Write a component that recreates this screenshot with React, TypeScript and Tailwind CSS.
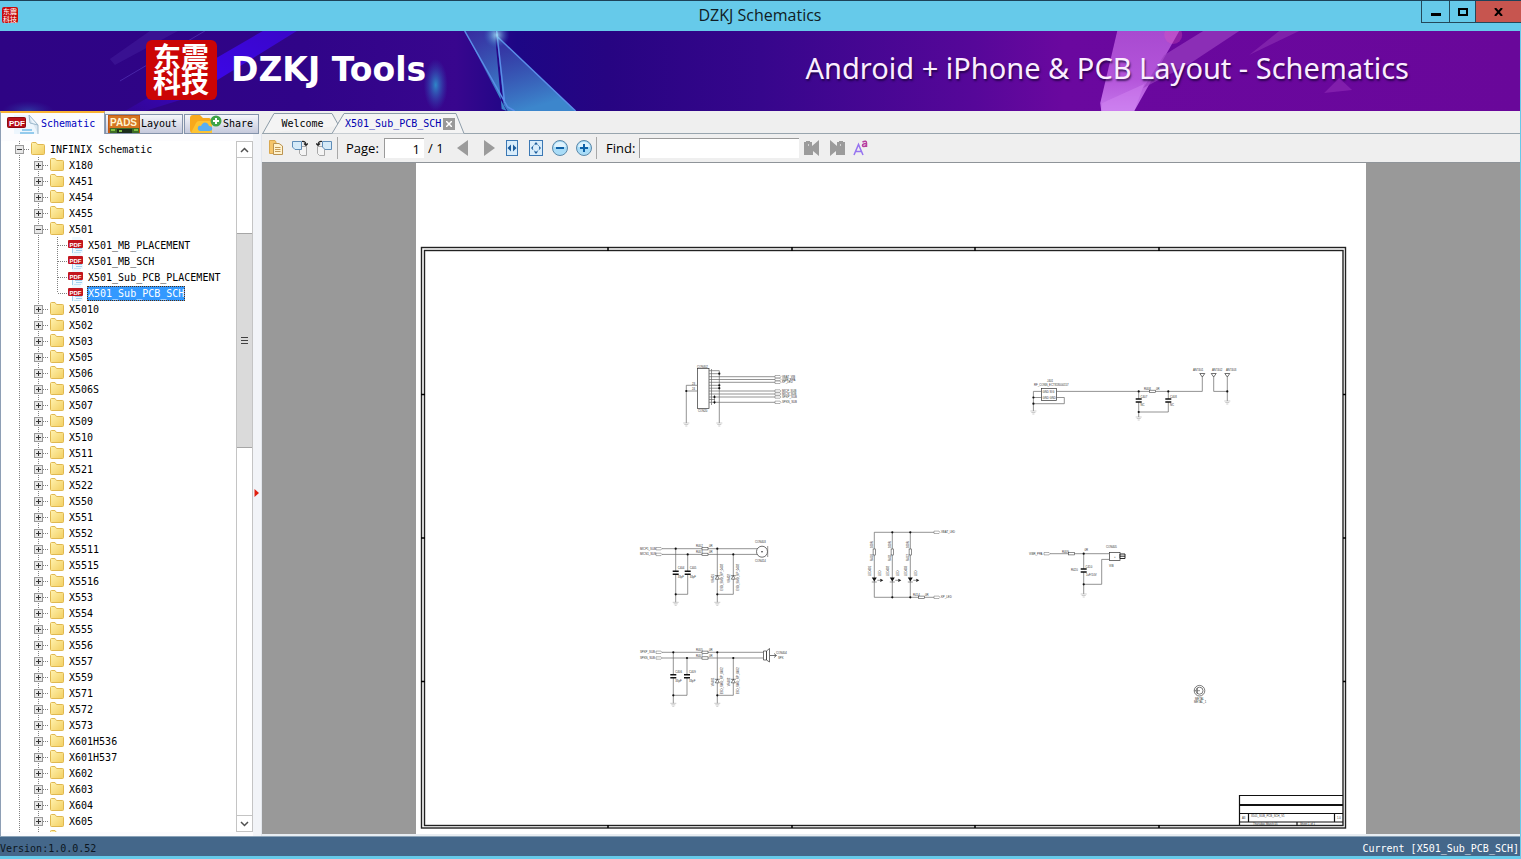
import { useState } from "react";
import type { ReactNode } from "react";

const MONO = "font-['DejaVu_Sans_Mono',monospace] text-[10px] leading-4";
const UI = "font-['Open_Sans','Noto_Sans',sans-serif]";

type Node = { name: string; level: number; open?: boolean; pdf?: boolean; last?: boolean };

const before = ["X180", "X451", "X454", "X455"];
const docs = ["X501_MB_PLACEMENT", "X501_MB_SCH", "X501_Sub_PCB_PLACEMENT", "X501_Sub_PCB_SCH"];
const after = [
  "X5010", "X502", "X503", "X505", "X506", "X506S", "X507", "X509", "X510", "X511", "X521",
  "X522", "X550", "X551", "X552", "X5511", "X5515", "X5516", "X553", "X554", "X555", "X556",
  "X557", "X559", "X571", "X572", "X573", "X601H536", "X601H537", "X602", "X603", "X604", "X605", "",
];

const nodes: Node[] = [
  { name: "INFINIX Schematic", level: 0, open: true },
  ...before.map((name) => ({ name, level: 1 })),
  { name: "X501", level: 1, open: true },
  ...docs.map((name, i) => ({ name, level: 2, pdf: true, last: i === docs.length - 1 })),
  ...after.map((name) => ({ name, level: 1 })),
];

/* ---------- tree ---------- */

function Guide({ kind }: { kind: "line" | "plus" | "minus" | "tee" | "end" }) {
  const box = kind === "plus" || kind === "minus";
  return (
    <svg width="19" height="16" viewBox="0 0 19 16" className="shrink-0" shapeRendering="crispEdges">
      <path d={kind === "end" ? "M9.5 0V8" : "M9.5 0V16"} stroke="#808080" strokeDasharray="1 1" />
      {kind !== "line" && <path d="M10 8.5H19" stroke="#808080" strokeDasharray="1 1" />}
      {box && <rect x="5.5" y="4.5" width="8" height="8" fill="#e8e8e8" stroke="#9a9a9a" />}
      {box && <path d="M7 8.5H12" stroke="#333" />}
      {kind === "plus" && <path d="M9.5 6V11" stroke="#333" />}
    </svg>
  );
}

function FolderIcon() {
  return (
    <svg width="15" height="14" viewBox="0 0 15 14" className="shrink-0">
      <defs>
        <linearGradient id="folder" x1="0" y1="0" x2="1" y2="1">
          <stop offset="0" stopColor="#fff3b0" />
          <stop offset="1" stopColor="#f3cf62" />
        </linearGradient>
      </defs>
      <path d="M0.500 11.500V1.500Q0.500 0.500 1.500 0.500H5L6.500 2.500H12.500Q13.500 2.500 13.500 3.500V11.500Q13.500 12.500 12.500 12.500H1.500Q0.500 12.500 0.500 11.500Z" fill="url(#folder)" stroke="#e0b850" />
    </svg>
  );
}

function PdfIcon() {
  return (
    <svg width="16" height="16" viewBox="0 0 16 16" className="shrink-0">
      <path d="M4 0H12L15 4V16H4Z" fill="#eef8ff" />
      <path d="M4.500 9V16M7 11.500H14M8 13.500H14" stroke="#9fd0ee" />
      <path d="M6 15.500H13" stroke="#c3e3f5" />
      <rect x="0" y="3" width="15" height="8" rx="1" fill="#c3161d" />
      <text x="1.500" y="9.500" fontSize="6" fontWeight="bold" fill="#fff" fontFamily="Liberation Sans">PDF</text>
    </svg>
  );
}

function TreeRow({ node, selected, onSelect }: { node: Node; selected: boolean; onSelect: () => void }) {
  return (
    <li className="flex h-4 shrink-0 items-center">
      {node.level > 0 && <Guide kind="line" />}
      {node.level > 1 && <Guide kind="line" />}
      {node.pdf ? <Guide kind={node.last ? "end" : "tee"} /> : <Guide kind={node.open ? "minus" : "plus"} />}
      <button type="button" onClick={onSelect} className="flex h-4 items-center pl-px">
        {node.pdf ? <PdfIcon /> : <span className="w-4 pl-px"><FolderIcon /></span>}
        {node.name && (
          <span
            className={`ml-[3px] mt-px whitespace-nowrap px-px leading-[15px] ${
              selected ? "bg-[#3399ff] text-white outline-1 -outline-offset-1 outline-dotted outline-[#553010]" : "text-black"
            }`}
          >
            {node.name}
          </span>
        )}
      </button>
    </li>
  );
}

function ScrollBar() {
  return (
    <div className="flex w-[17px] shrink-0 flex-col border-x border-[#c4c4c4] bg-white">
      <button type="button" aria-label="Scroll up" className="flex h-[17px] items-center justify-center border-y border-[#c4c4c4]">
        <svg width="9" height="6" viewBox="0 0 9 6"><path d="M1 5L4.500 1.500L8 5" fill="none" stroke="#505050" strokeWidth="1.500" /></svg>
      </button>
      <div className="flex-[75]" />
      <div className="flex flex-[214] items-center justify-center border-y border-[#a6a6a6] bg-[#dadada]">
        <svg width="7" height="7" viewBox="0 0 7 7" shapeRendering="crispEdges"><path d="M0 0.500H7M0 3.500H7M0 6.500H7" stroke="#404040" /></svg>
      </div>
      <div className="flex-[369]" />
      <button type="button" aria-label="Scroll down" className="flex h-[17px] items-center justify-center border-y border-[#c4c4c4]">
        <svg width="9" height="6" viewBox="0 0 9 6"><path d="M1 1L4.500 4.500L8 1" fill="none" stroke="#505050" strokeWidth="1.500" /></svg>
      </button>
    </div>
  );
}

/* ---------- side tabs ---------- */

function SchematicTabIcon() {
  return (
    <svg width="32" height="20" viewBox="0 0 32 20">
      <path d="M7 1H23L31 11V20H7Z" fill="#edf6fd" />
      <path d="M22 1L31 11V20M22 1L23 9L31 11" fill="#dbe8f2" stroke="#9bb8cc" />
      <path d="M15 16H25M13 19H27" stroke="#94cbed" strokeWidth="2" />
      <rect x="0.500" y="3.500" width="18" height="10" rx="1" fill="#b90f18" stroke="#8a0a10" />
      <text x="2" y="11.500" fontSize="8" fontWeight="bold" fill="#fff" fontFamily="Liberation Sans">PDF</text>
    </svg>
  );
}

function PadsIcon() {
  return (
    <svg width="32" height="18" viewBox="0 0 32 18">
      <rect width="32" height="18" fill="#c25a13" />
      <rect x="1" y="1" width="30" height="12" fill="#d47421" />
      <path d="M2 13H31V18H2Z" fill="#3d6d26" />
      <path d="M9 14H24V18H9Z" fill="#1c2e1c" />
      <path d="M3 15H7M26 15H30M11 16H14" stroke="#7fc043" strokeWidth="2" />
      <text x="2" y="11" fontSize="10" fontWeight="bold" fill="#fff4cf" fontFamily="Liberation Sans">PADS</text>
    </svg>
  );
}

function ShareIcon() {
  return (
    <svg width="32" height="18" viewBox="0 0 32 18">
      <path d="M0 3Q0 0 3 0H10L13 3H19Q21 3 21 6V18H3Q0 18 0 15Z" fill="#f8a91c" />
      <path d="M1 18L6 8Q7 6 9 6H22V18Z" fill="#fdc331" />
      <path d="M10 16Q7 15 8 12Q9 10 11 11Q13 6 17 8Q19 10 19 11Q23 11 22 15Q21 16 19 16Z" fill="#58aef0" />
      <circle cx="26" cy="6" r="5.500" fill="#3fa447" />
      <path d="M26 3V9M23 6H29" stroke="#fff" strokeWidth="2" />
    </svg>
  );
}

const sideTabs = [
  { label: "Schematic", icon: <SchematicTabIcon /> },
  { label: "Layout", icon: <PadsIcon /> },
  { label: "Share", icon: <ShareIcon /> },
];

function SidePanel({ selected, onSelect }: { selected: string; onSelect: (name: string) => void }) {
  return (
    <aside className="flex w-[262px] shrink-0 flex-col">
      <div className="flex h-[23px] shrink-0 items-end">
        <button type="button" className="flex h-[23px] w-[105px] items-center gap-[2px] border-x border-t-2 border-x-[#8e9fb5] border-t-[#f9b233] bg-[#fcfcfe] pl-[6px] text-[#0000c0]">
          {sideTabs[0].icon}
          {sideTabs[0].label}
        </button>
        {sideTabs.slice(1).map((tab, i) => (
          <button
            key={tab.label}
            type="button"
            className={`flex h-5 items-center gap-px border border-[#8493ab] bg-linear-to-b from-[#f6f7fb] to-[#c5c9dc] text-black ${
              i === 0 ? "w-[78px] pl-[2px]" : "ml-px w-[75px] pl-[5px]"
            }`}
          >
            {tab.icon}
            {tab.label}
          </button>
        ))}
      </div>
      <div className="flex min-h-0 flex-1">
        <div className="flex min-h-0 flex-1 border-l border-[#8e9fb5] bg-[#fcfcfe] pb-1 pt-[7px]">
          <ul className="flex min-h-0 min-w-0 flex-1 flex-col overflow-hidden bg-white pl-[9px]">
            {nodes.map((node) => (
              <TreeRow key={node.name} node={node} selected={node.name === selected} onSelect={() => onSelect(node.name)} />
            ))}
          </ul>
          <ScrollBar />
        </div>
        <div className="flex w-[9px] items-center border-r border-[#e2e6ec] bg-[#f2f4f8]">
          <svg width="5" height="8" viewBox="0 0 5 8" className="ml-px mt-4"><path d="M0.500 0L5 4L0.500 8Z" fill="#e02010" /></svg>
        </div>
      </div>
    </aside>
  );
}

/* ---------- header ---------- */

function TitleBar() {
  return (
    <header className="flex h-[31px] shrink-0 items-start border-t border-[#1d4259] bg-[#66caea]">
      <div className="w-[99px] shrink-0 pl-[2px] pt-[6px]">
        <p className="h-4 w-4 rounded-[2px] bg-[#c80c0c] px-px text-center font-['Noto_Sans_CJK_SC',sans-serif] text-[7px] leading-[8px] text-white">
          东震科技
        </p>
      </div>
      <h1 className={`flex-1 pt-[2px] text-center text-[16px] leading-6 text-[#101c24] ${UI}`}>DZKJ Schematics</h1>
      <div className="flex h-[22px] shrink-0 border-b border-l border-[#24485a]">
        <button type="button" aria-label="Minimize" className="flex w-7 items-center justify-center border-r border-[#24485a]">
          <svg width="10" height="8" viewBox="0 0 10 8"><path d="M0 5H10V8H0Z" fill="#000" /></svg>
        </button>
        <button type="button" aria-label="Maximize" className="flex w-[26px] items-center justify-center border-r border-[#24485a]">
          <svg width="10" height="8" viewBox="0 0 10 8"><rect x="1" y="1" width="8" height="6" fill="none" stroke="#000" strokeWidth="2" /></svg>
        </button>
        <button type="button" aria-label="Close" className="flex w-[45px] items-center justify-center bg-[#c7554f]">
          <svg width="9" height="8" viewBox="0 0 9 8"><path d="M1 0L8 8M8 0L1 8" stroke="#000" strokeWidth="2" /></svg>
        </button>
      </div>
    </header>
  );
}

function Banner() {
  return (
    <div className="relative flex h-20 shrink-0 items-center overflow-hidden bg-[#300488]">
      <svg className="absolute inset-0 h-full w-full" viewBox="0 0 1521 80" preserveAspectRatio="none">
        <defs>
          <linearGradient id="base" x1="0" x2="1">
            <stop offset="0" stopColor="#2e0484" />
            <stop offset="0.200" stopColor="#300488" />
            <stop offset="0.300" stopColor="#38068e" />
            <stop offset="0.340" stopColor="#1d0685" />
            <stop offset="0.400" stopColor="#270482" />
            <stop offset="0.500" stopColor="#36068c" />
            <stop offset="0.640" stopColor="#560799" />
            <stop offset="0.700" stopColor="#6a089f" />
            <stop offset="1" stopColor="#69079a" />
          </linearGradient>
          <linearGradient id="beam" x1="0" y1="0" x2="0.300" y2="1">
            <stop offset="0" stopColor="#3a3aa8" stopOpacity="0.700" />
            <stop offset="1" stopColor="#3c86cc" />
          </linearGradient>
          <linearGradient id="pink" x1="0" y1="0" x2="0" y2="1">
            <stop offset="0" stopColor="#a84ad0" />
            <stop offset="0.600" stopColor="#b455da" />
            <stop offset="1" stopColor="#c678ec" />
          </linearGradient>
          <linearGradient id="stripe" x1="1" y1="0" x2="0" y2="1">
            <stop offset="0" stopColor="#3a06c8" />
            <stop offset="0.500" stopColor="#3c06e4" />
            <stop offset="1" stopColor="#3a06b8" stopOpacity="0.300" />
          </linearGradient>
          <radialGradient id="glow">
            <stop offset="0" stopColor="#2f86c8" />
            <stop offset="1" stopColor="#2f50b8" stopOpacity="0" />
          </radialGradient>
          <radialGradient id="spark">
            <stop offset="0" stopColor="#b0f4ff" />
            <stop offset="1" stopColor="#3070c8" stopOpacity="0" />
          </radialGradient>
        </defs>
        <rect width="1521" height="80" fill="url(#base)" />
        <path d="M263 0H297L190 66L145 80H125Z" fill="url(#stripe)" />
        <path d="M150 0H178L115 34L110 28Z" fill="#4d2aa8" opacity="0.350" />
        <path d="M205 0L120 50" stroke="#5a3cc0" opacity="0.600" />
        <ellipse cx="436" cy="54" rx="12" ry="26" fill="url(#glow)" />
        <ellipse cx="28" cy="80" rx="26" ry="10" fill="url(#glow)" opacity="0.400" />
        <path d="M465 0H495L502 78L507 80Z" fill="url(#beam)" />
        <path d="M497 5L576 80H508L504 74Z" fill="url(#beam)" />
        <path d="M465 0L508 76L515 80M497 0L505 72M497 5L576 80" fill="none" stroke="#5a8ee8" strokeWidth="1.500" />
        <circle cx="497" cy="4" r="13" fill="url(#spark)" opacity="0.800" />
        <path d="M1118 0H1180L1135 80H1102L1101 72Z" fill="url(#pink)" />
        <path d="M1103 72L1145 53L1135 80H1102Z" fill="#d68cf5" opacity="0.400" />
        <path d="M1204 0H1240L1190 33L1144 57L1165 24Z" fill="#9a3fc0" opacity="0.700" />
        <path d="M1280 0H1300L1250 24Z" fill="#8e32b4" opacity="0.600" />
        <path d="M1340 47L1353 59L1325 62Z" fill="#8c28b4" opacity="0.700" />
        <circle cx="1174" cy="4" r="9" fill="#e75ab8" opacity="0.300" />
      </svg>
      <div className="relative flex w-full items-center pb-[3px]">
        <p className="ml-[146px] h-[60px] w-[71px] shrink-0 rounded-md bg-[#cb0505] px-[7px] pt-1 text-left font-['Noto_Sans_CJK_SC',sans-serif] text-[28px] font-bold leading-[25px] text-white">
          东震科技
        </p>
        <p className="ml-[14px] whitespace-nowrap font-['DejaVu_Sans',sans-serif] text-[33px] font-bold leading-10 text-white">DZKJ Tools</p>
        <p className="ml-auto mr-[111px] whitespace-nowrap pb-1 font-['Noto_Sans','Open_Sans',sans-serif] text-[29px] leading-9 text-[#fbeeff] [text-shadow:1px_2px_2px_rgba(20,0,50,0.7)]">
          Android + iPhone &amp; PCB Layout - Schematics
        </p>
      </div>
    </div>
  );
}

/* ---------- toolbar ---------- */

function ToolButton({ label, width = "w-6", children }: { label: string; width?: string; children: ReactNode }) {
  return (
    <button type="button" aria-label={label} className={`flex h-6 shrink-0 items-center justify-center ${width}`}>
      <svg width="16" height="16" viewBox="0 0 16 16">{children}</svg>
    </button>
  );
}

const page = { fill: "#d5eaf8", stroke: "#5f8db8" };
const greyPage = { fill: "#f4f4f4", stroke: "#a9a9a9" };

function Toolbar() {
  return (
    <div className={`flex h-7 shrink-0 items-center bg-[#efefef] pl-[2px] text-[13px] text-black ${UI}`}>
      <ToolButton label="Open">
        <path d="M1.500 0.500H7L8 2V13.500H1.500Z" fill="#f5c56b" stroke="#d9a850" />
        <path d="M5.500 3.500H11L14.500 6V14.500H5.500Z" fill="#fff3cf" stroke="#bb9350" />
        <path d="M7 7.500H12.500M7 9.500H12.500M7 11.500H12.500" stroke="#c39a58" />
      </ToolButton>
      <ToolButton label="Rotate right">
        <path d="M7.500 6.500H14.500V15.500H9.500L7.500 13.500Z" {...greyPage} />
        <path d="M0.500 1.500H9.500V9.500H3L0.500 7Z" {...page} />
        <path d="M10 1.500Q14 1 14 5M12 3.500L14 5.500L16 3.500" fill="none" stroke="#222" strokeWidth="1.200" />
      </ToolButton>
      <ToolButton label="Rotate left">
        <path d="M1.500 6.500H8.500V15.500H3.500L1.500 13.500Z" {...greyPage} />
        <path d="M6.500 1.500H15.500V9.500H9L6.500 7Z" {...page} />
        <path d="M6 1.500Q2 1 2 5M0 3.500L2 5.500L4 3.500" fill="none" stroke="#222" strokeWidth="1.200" />
      </ToolButton>
      <div className="ml-px h-[22px] w-px bg-[#a8a8a8]" />
      <label htmlFor="page-no" className="ml-2 w-[38px]">Page:</label>
      <input id="page-no" defaultValue="1" className="h-5 w-10 border-l border-t border-[#9a9a9a] bg-white pr-1 text-right outline-none" />
      <span className="ml-1 w-[22px] whitespace-nowrap">/ 1</span>
      <ToolButton label="Previous page" width="w-[25px]"><path d="M13 0V16L2 8Z" fill="#9b9b9b" /></ToolButton>
      <ToolButton label="Next page" width="w-[25px]"><path d="M4 0V16L15 8Z" fill="#9b9b9b" /></ToolButton>
      <ToolButton label="Fit width">
        <rect x="2.500" y="0.500" width="11" height="15" fill="#d9edfb" stroke="#3b78b4" />
        <path d="M7 4.500V11.500L3.500 8ZM9 4.500V11.500L12.500 8Z" fill="#1c5c9c" />
      </ToolButton>
      <ToolButton label="Fit page">
        <rect x="1.500" y="0.500" width="13" height="15" fill="#d9edfb" stroke="#3b78b4" />
        <path d="M8 2L10 4.500H6ZM8 14L10 11.500H6ZM3 8L5 6V10ZM13 8L11 6V10Z" fill="#1c5c9c" />
        <circle cx="8" cy="8" r="3.500" fill="none" stroke="#4a84b8" strokeDasharray="1.500 1.500" />
      </ToolButton>
      <ToolButton label="Zoom out">
        <circle cx="8" cy="8" r="7.500" fill="#a9dcf7" stroke="#5b88a9" />
        <path d="M2 7Q3 2 8 2T14 7Z" fill="#dff3fd" />
        <path d="M4 8H12" stroke="#0f62a8" strokeWidth="2" />
      </ToolButton>
      <ToolButton label="Zoom in">
        <circle cx="8" cy="8" r="7.500" fill="#a9dcf7" stroke="#5b88a9" />
        <path d="M2 7Q3 2 8 2T14 7Z" fill="#dff3fd" />
        <path d="M4 8H12M8 4V12" stroke="#0f62a8" strokeWidth="2" />
      </ToolButton>
      <div className="h-[22px] w-px bg-[#a8a8a8]" />
      <label htmlFor="find" className="ml-[9px] w-[33px]">Find:</label>
      <input id="find" className="h-5 w-40 border-l border-t border-[#9a9a9a] bg-white px-1 outline-none" />
      <ToolButton label="Find previous" width="w-[25px]">
        <path d="M0 2H2V1H6V2H8V6L15 0V16L9 11V15H0Z" fill="#9b9b9b" />
        <path d="M4.500 4V6" stroke="#d4d4d4" />
      </ToolButton>
      <ToolButton label="Find next" width="w-[25px]">
        <path d="M16 2H14V1H10V2H8V6L1 0V16L7 11V15H16Z" fill="#9b9b9b" />
        <path d="M11.500 4V6" stroke="#d4d4d4" />
      </ToolButton>
      <ToolButton label="Match case" width="w-[23px]">
        <path d="M1 15L5.500 4.500L10 15M2.500 11.500H8.500" fill="none" stroke="#9673f0" strokeWidth="1.500" />
        <path d="M9.500 2Q13.500 0 13.500 3V7M13.500 3.500Q9.500 3.500 9.500 5.500Q10 7.500 13.500 5.500" fill="none" stroke="#b83e9e" strokeWidth="1.500" />
      </ToolButton>
    </div>
  );
}

function DocTabs() {
  return (
    <div className="flex h-[23px] shrink-0 items-end border-b border-[#98a5ae] bg-[#efefef]">
      <button type="button" className="relative h-5 w-[78px] pl-[3px] pt-[2px] text-center text-black">
        <svg className="absolute inset-0" width="78" height="20" viewBox="0 0 78 20">
          <path d="M1 20L12 0.500H70L77 13" fill="#f4f4f4" stroke="#8c9ca8" />
        </svg>
        <span className="relative">Welcome</span>
      </button>
      <div className="relative -mb-px -ml-2 flex h-[21px] w-[134px] items-center pl-[13px] pt-px">
        <svg className="absolute inset-0" width="134" height="21" viewBox="0 0 134 21">
          <path d="M0 20.500L12 0.500H124L132 20.500Z" fill="#f4f4f4" />
          <path d="M0 20.500L12 0.500H124L132 20.500" fill="none" stroke="#8c9ca8" />
        </svg>
        <button type="button" className="relative text-[#0000b0]">X501_Sub_PCB_SCH</button>
        <button type="button" aria-label="Close tab" className="relative ml-[2px] flex h-3 w-3 items-center justify-center bg-[#999]">
          <svg width="6" height="6" viewBox="0 0 6 6"><path d="M0 0L6 6M6 0L0 6" stroke="#fff" strokeWidth="1.500" /></svg>
        </button>
      </div>
    </div>
  );
}

/* ---------- schematic sheet ---------- */

const Wire = ({ d }: { d: string }) => <path d={d} fill="none" stroke="#666" strokeWidth="0.700" />;
const Dot = ({ x, y }: { x: number; y: number }) => <circle cx={x} cy={y} r="1.100" fill="#111" />;
const Note = ({ x, y, v, children }: { x: number; y: number; v?: boolean; children: string }) => (
  <text x={x} y={y} fontSize="2.800" fill="#333" transform={v ? `rotate(-90 ${x} ${y})` : undefined}>{children}</text>
);
const Ground = ({ x, y }: { x: number; y: number }) => (
  <path d={`M${x - 3} ${y}H${x + 3}M${x - 2} ${y + 1.5}H${x + 2}M${x - 1} ${y + 3}H${x + 1}`} stroke="#999" strokeWidth="0.500" />
);
const Cap = ({ x, y }: { x: number; y: number }) => (
  <g>
    <rect x={x - 1} y={y} width="2" height="3" fill="#fff" />
    <path d={`M${x - 3} ${y}H${x + 3}M${x - 3} ${y + 3}H${x + 3}`} stroke="#111" strokeWidth="1.400" />
  </g>
);
const Res = ({ x, y, v }: { x: number; y: number; v?: boolean }) => (
  <rect x={x} y={y} width={v ? 2.4 : 6} height={v ? 6 : 2.4} fill="#fff" stroke="#444" strokeWidth="0.600" />
);
const Port = ({ x, y }: { x: number; y: number }) => (
  <path d={`M${x} ${y - 1.2}H${x + 5}L${x + 6} ${y}L${x + 5} ${y + 1.2}H${x}Z`} fill="#fff" stroke="#666" strokeWidth="0.500" />
);

function AudioBlock({ y, caps, names, gap, values }: { y: number; caps: number[]; names: string[]; gap: number; values: string[] }) {
  const base = y + gap;
  const low = y + 5.7;
  return (
    <g>
      <Note x={641} y={y + 1}>{names[0]}</Note>
      <Note x={641} y={low + 1}>{names[1]}</Note>
      <Port x={657} y={y} />
      <Port x={657} y={low} />
      <Wire d={`M663 ${y}H764M663 ${low}H764`} />
      <Res x={703} y={y - 1.2} />
      <Res x={703} y={low - 1.2} />
      <Note x={697} y={y - 1.5}>{values[0]}</Note>
      <Note x={697} y={low - 1.5}>{values[1]}</Note>
      <Note x={710} y={y - 1.5}>0R</Note>
      <Note x={710} y={low - 1.5}>0R</Note>
      <Wire d={`M${caps[0]} ${y}V${base + 8}M${caps[1]} ${low}V${base}H${caps[0]}`} />
      <Wire d={`M718.300 ${y}V${base + 8}M734.300 ${low}V${base}H718.300`} />
      {caps.map((x, i) => (
        <g key={x}>
          <Cap x={x} y={y + 22.5} />
          <Note x={x + 2} y={y + 20.5}>{values[i + 2]}</Note>
          <Note x={x + 2} y={y + 29.5}>33pF</Note>
          <Dot x={x} y={i ? low : y} />
        </g>
      ))}
      {[718.3, 734.3].map((x, i) => (
        <g key={x}>
          <path d={`M${x - 2} ${y + 30.5}H${x + 2}L${x} ${y + 27}ZM${x - 2.5} ${y + 27}H${x + 2.5}`} fill="#fff" stroke="#333" strokeWidth="0.600" />
          <Note v x={x - 3} y={y + 34}>{`VR40${i + 1}`}</Note>
          <Note v x={x + 5.5} y={y + 42}>ESD_SMD_NP_0402</Note>
          <Dot x={x} y={i ? low : y} />
        </g>
      ))}
      <Dot x={caps[0]} y={base} />
      <Dot x={718.3} y={base} />
      <Ground x={caps[0]} y={base + 8} />
      <Ground x={718.3} y={base + 8} />
    </g>
  );
}

const busPins = [
  { y: 376.7, name: "VBAT_VIB" },
  { y: 379.5, name: "VIBR_PPA" },
  { y: 382.3, name: "KP_LED" },
  { y: 391, name: "MICP_SUB" },
  { y: 394, name: "MICN_SUB" },
  { y: 397, name: "SPKP_SUB" },
  { y: 402.3, name: "SPKN_SUB" },
];

function Sheet() {
  return (
    <svg width="950" height="671" viewBox="417 163 950 671" className="shrink-0 bg-white" fontFamily="Liberation Sans">
      <rect x="422.500" y="247.500" width="924" height="580.500" fill="none" stroke="#222" strokeWidth="1.400" />
      <rect x="425.500" y="250.500" width="918.500" height="575" fill="none" stroke="#222" strokeWidth="1.400" />
      <path d="M609 247V251M793 247V251M976 247V251M1160 247V251M609 825V828M793 825V828M976 825V828M1160 825V828M422 394.500H426M422 538H426M422 681.500H426M1344 394.500H1347M1344 538H1347M1344 681.500H1347" stroke="#000" strokeWidth="1.500" />
      <path d="M1240.500 825V795.500H1344M1240.500 804.500H1344M1240.500 805.500H1344M1240.500 813.500H1344M1240.500 822H1344M1249.500 813.500V822M1335.500 813.500V822M1298 822V826" fill="none" stroke="#111" strokeWidth="1.200" />
      <Note x={1243} y={819}>A3</Note>
      <Note x={1252} y={816.5}>X501_SUB_PCB_SCH_V1</Note>
      <Note x={1338} y={819}>1.0</Note>
      <Note x={1254} y={825.2}>Thursday, March 05</Note>
      <Note x={1301} y={825.2}>Sheet 1 of 1</Note>

      {/* board connector */}
      <rect x="698.500" y="368.500" width="11.500" height="40" fill="#fff" stroke="#333" strokeWidth="0.700" />
      <Note x={698} y={367.5}>CON402</Note>
      <Note x={699} y={411.5}>CON20</Note>
      <Wire d="M698 385.300H687.300V423M687.300 391H698M710 370.700H720.300V423M710 373.700H720.300M710 385.300H720.300M710 388.200H720.300M712.500 369V405M715.500 395V404M710 399.500H716" />
      {busPins.map((pin) => (
        <g key={pin.name}>
          <Wire d={`M710 ${pin.y}H776`} />
          <Port x={776} y={pin.y} />
          <Note x={783} y={pin.y + 1}>{pin.name}</Note>
        </g>
      ))}
      <Note x={693} y={384.5}>23</Note>
      <Note x={693} y={390.2}>24</Note>
      <Dot x={687.3} y={391} />
      <Dot x={720.3} y={373.7} />
      <Dot x={720.3} y={385.3} />
      <Dot x={720.3} y={388.2} />
      <Dot x={715.5} y={397} />
      <Dot x={715.5} y={402.3} />
      <Ground x={687.3} y={423} />
      <Ground x={720.3} y={423} />

      {/* antenna */}
      <rect x="1042.500" y="388.500" width="15" height="12" fill="#fff" stroke="#333" strokeWidth="0.700" />
      <Note x={1048} y={381.5}>J401</Note>
      <Note x={1035} y={385.7}>RF_CONN_ECT818000157</Note>
      <Note x={1043.5} y={392.5}>GND  SIG</Note>
      <Note x={1043.5} y={398.5}>GND GND</Note>
      <Wire d="M1057.500 391.400H1203.300V377M1042.500 391.400H1034.400V411M1034.400 397.500H1042.500M1057.500 397.500H1065.300V403.700H1034.400M1139.700 391.400V417M1169.300 391.400V412H1139.700M1214.700 377V391.400H1228.300M1228.300 377V401" />
      <Res x={1150.5} y={390.2} />
      <Note x={1145} y={389.5}>R408</Note>
      <Note x={1157} y={389.5}>0R</Note>
      <Cap x={1139.7} y={399} />
      <Cap x={1169.3} y={399} />
      <Note x={1141.5} y={397.5}>C407</Note>
      <Note x={1141.5} y={406}>NC</Note>
      <Note x={1171} y={398}>C408</Note>
      <Note x={1171} y={406}>NC</Note>
      {[1203.3, 1214.7, 1228.3].map((x, i) => (
        <g key={x}>
          <path d={`M${x - 2.5} 373.500H${x + 2.5}L${x} 377Z`} fill="#fff" stroke="#333" strokeWidth="0.700" />
          <Note x={[1194, 1213, 1227][i]} y={371}>{`ANT40${i + 1}`}</Note>
        </g>
      ))}
      <Dot x={1034.4} y={397.5} />
      <Dot x={1034.4} y={403.7} />
      <Dot x={1139.7} y={391.4} />
      <Dot x={1169.3} y={391.4} />
      <Dot x={1139.7} y={412} />
      <Dot x={1228.3} y={391.4} />
      <Ground x={1034.4} y={411} />
      <Ground x={1139.7} y={417} />
      <Ground x={1228.3} y={401} />

      {/* microphone and speaker */}
      <AudioBlock y={548.7} caps={[676.7, 688.7]} gap={45.6} names={["MICP1_SUB", "MICN1_SUB"]} values={["R402", "R403", "C404", "C405"]} />
      <circle cx="763" cy="551.700" r="5.500" fill="#fff" stroke="#333" strokeWidth="0.700" />
      <circle cx="763" cy="551.700" r="0.800" fill="#222" />
      <Wire d="M768.700 546V557" />
      <Note x={756} y={542.5}>CON403</Note>
      <Note x={756} y={562}>CON414</Note>
      <AudioBlock y={652.3} caps={[674.3, 688]} gap={43} names={["SPKP_SUB", "SPKN_SUB"]} values={["R405", "R407", "C406", "C409"]} />
      <path d="M764.500 651H767.500V660H764.500ZM767.500 651L770.500 648.500V662L767.500 660ZM771 655.500H777M775 653.500L777.500 655.500L775 657.500" fill="#fff" stroke="#333" strokeWidth="0.700" />
      <Note x={777} y={653.7}>CON404</Note>
      <Note x={779} y={659}>SPK</Note>

      {/* key LEDs */}
      <Wire d="M875.300 532.300H935M875.300 597.300H935M875.300 532.300V597.300M893.300 532.300V597.300M911.300 532.300V597.300" />
      {[875.3, 893.3, 911.3].map((x, i) => (
        <g key={x}>
          <Res v x={x - 1.2} y={549} />
          <path d={`M${x - 2.5} 577.500H${x + 2.5}L${x} 581.500ZM${x + 6} 578.700L${x + 9} 580.300L${x + 6} 582Z`} fill="#111" />
          <Wire d={`M${x - 2.5} 582H${x + 2.5}M${x + 3} 580.300H${x + 7}`} />
          <Note v x={x - 1.5} y={561}>{`R41${i}`}</Note>
          <Note v x={x - 1.5} y={548}>100R</Note>
          <Note v x={x - 3} y={576}>{`LED40${i + 1}`}</Note>
          <Note v x={x + 7} y={576}>LED</Note>
          {i > 0 && <Dot x={x} y={532.3} />}
          {i > 0 && <Dot x={x} y={597.3} />}
        </g>
      ))}
      <Res x={919.5} y={596.1} />
      <Note x={914} y={595.5}>R414</Note>
      <Note x={926} y={595.5}>0R</Note>
      <Port x={935} y={532.3} />
      <Port x={935} y={597.3} />
      <Note x={942} y={533.3}>VBAT_LED</Note>
      <Note x={942} y={598.3}>KP_LED</Note>

      {/* vibrator */}
      <Note x={1030} y={554.7}>VIBR_PPA</Note>
      <Port x={1045} y={553.7} />
      <Wire d="M1051 553.700H1110M1084.700 553.700V594M1084.700 584.300H1102.700V559.400H1110" />
      <Res x={1069.5} y={552.5} />
      <Note x={1063} y={552.5}>R409</Note>
      <Note x={1085.5} y={550.5}>0R</Note>
      <Cap x={1084.7} y={569} />
      <Note x={1086.5} y={567.5}>C410</Note>
      <Note x={1072} y={571}>R420</Note>
      <Note x={1087} y={575.5}>1uF/10V</Note>
      <rect x="1110.500" y="552.500" width="10.500" height="8" fill="#fff" stroke="#333" strokeWidth="0.700" />
      <path d="M1121 554H1126V558.500H1121ZM1121 556.200H1126" fill="#fff" stroke="#111" strokeWidth="0.900" />
      <Note x={1107} y={547.5}>CON405</Note>
      <Note x={1110} y={567}>VIB</Note>
      <Note x={1115} y={557.5}>+</Note>
      <Dot x={1084.7} y={553.7} />
      <Dot x={1084.7} y={584.3} />
      <Ground x={1084.7} y={594} />

      <circle cx="1200.500" cy="690.700" r="5.300" fill="none" stroke="#444" strokeWidth="0.700" />
      <circle cx="1200.500" cy="690.700" r="3.500" fill="none" stroke="#444" strokeWidth="0.700" />
      <Wire d="M1195 690.700H1201M1198.500 688V694" />
      <Note x={1196} y={700}>METAL</Note>
      <Note x={1195} y={703}>METAL_1</Note>
    </svg>
  );
}

export default function App() {
  const [selected, setSelected] = useState("X501_Sub_PCB_SCH");

  return (
    <div className={`flex h-screen flex-col overflow-hidden bg-[#66caea] pb-[3px] ${MONO}`}>
      <TitleBar />
      <div className="mr-px flex min-h-0 flex-1 flex-col">
        <Banner />
        <div className="flex min-h-0 flex-1 bg-[#efefef]">
          <SidePanel selected={selected} onSelect={setSelected} />
          <main className="flex min-w-0 flex-1 flex-col">
            <DocTabs />
            <Toolbar />
            <div className="flex min-h-0 flex-1 justify-center overflow-hidden border-t border-[#8f9499] bg-[#999]">
              <Sheet />
            </div>
            <div className="h-[2px] shrink-0 bg-[#e8edf2]" />
          </main>
        </div>
        <footer className="flex h-5 shrink-0 items-end justify-between border-t border-[#8ba3b8] bg-[#44678a]">
          <span className="-mb-px text-[#0c1620]">Version:1.0.0.52</span>
          <span className="-mb-px pr-px text-white">Current [X501_Sub_PCB_SCH]</span>
        </footer>
      </div>
    </div>
  );
}
